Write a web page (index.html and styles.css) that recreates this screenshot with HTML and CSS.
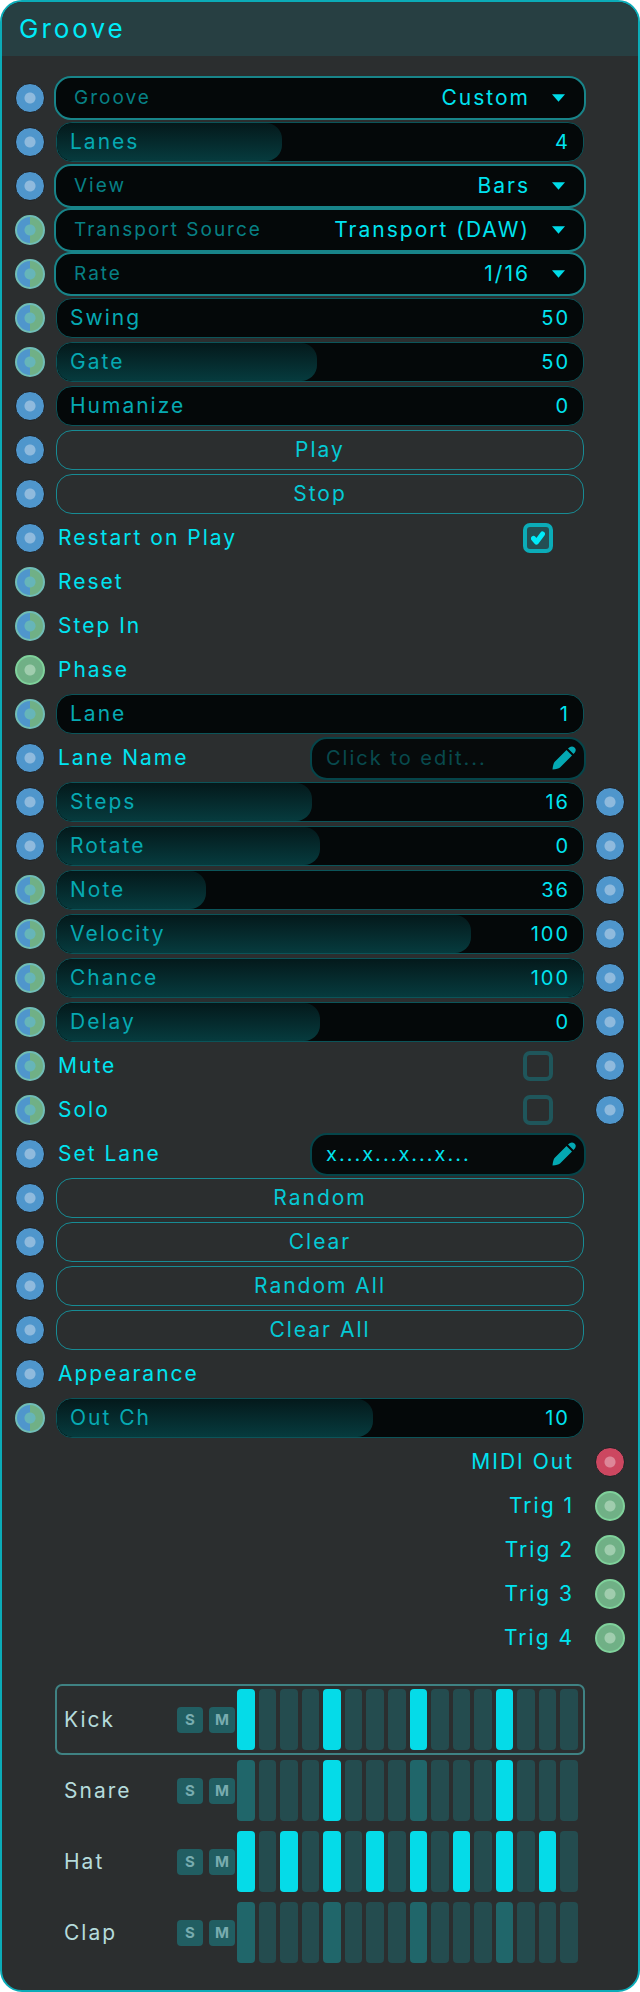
FILE: index.html
```html
<!DOCTYPE html>
<html lang="en">
<head>
    <meta charset="UTF-8">
    <meta name="viewport" content="width=device-width, initial-scale=1.0">
    <title>Groove</title>
    <link rel="stylesheet" href="styles.css">
</head>
<body>
    <div class="module">
        <h1 class="title">Groove</h1>

        <div class="rows">
            <div class="row">
                <span class="port"></span>
                <div class="dropdown">
                    <label for="groove">Groove</label>
                    <select id="groove"><option>Custom</option></select>
                    <svg class="arrow" viewBox="0 0 14 8"><path d="M0 0h14L7 8z"/></svg>
                </div>
            </div>
            <div class="row">
                <span class="port"></span>
                <div class="slider">
                    <span class="fill" style="width: 42.86%"></span>
                    <input type="range" id="lanes" min="1" max="8" value="4">
                    <label for="lanes">Lanes</label>
                    <output for="lanes">4</output>
                </div>
            </div>
            <div class="row">
                <span class="port"></span>
                <div class="dropdown">
                    <label for="view">View</label>
                    <select id="view"><option>Bars</option></select>
                    <svg class="arrow" viewBox="0 0 14 8"><path d="M0 0h14L7 8z"/></svg>
                </div>
            </div>
            <div class="row">
                <span class="port split"></span>
                <div class="dropdown">
                    <label for="transport">Transport Source</label>
                    <select id="transport"><option>Transport (DAW)</option></select>
                    <svg class="arrow" viewBox="0 0 14 8"><path d="M0 0h14L7 8z"/></svg>
                </div>
            </div>
            <div class="row">
                <span class="port split"></span>
                <div class="dropdown">
                    <label for="rate">Rate</label>
                    <select id="rate"><option>1/16</option></select>
                    <svg class="arrow" viewBox="0 0 14 8"><path d="M0 0h14L7 8z"/></svg>
                </div>
            </div>
            <div class="row">
                <span class="port split"></span>
                <div class="slider">
                    <input type="range" id="swing" min="50" max="75" value="50">
                    <label for="swing">Swing</label>
                    <output for="swing">50</output>
                </div>
            </div>
            <div class="row">
                <span class="port split"></span>
                <div class="slider">
                    <span class="fill" style="width: 49.5%"></span>
                    <input type="range" id="gate" min="1" max="100" value="50">
                    <label for="gate">Gate</label>
                    <output for="gate">50</output>
                </div>
            </div>
            <div class="row">
                <span class="port"></span>
                <div class="slider">
                    <input type="range" id="humanize" min="0" max="100" value="0">
                    <label for="humanize">Humanize</label>
                    <output for="humanize">0</output>
                </div>
            </div>
            <div class="row">
                <span class="port"></span>
                <button class="action">Play</button>
            </div>
            <div class="row">
                <span class="port"></span>
                <button class="action">Stop</button>
            </div>
            <div class="row">
                <span class="port"></span>
                <div class="plain">
                    <label for="restart">Restart on Play</label>
                    <span class="check">
                        <input type="checkbox" id="restart" checked>
                        <svg class="tick" viewBox="0 0 14 14"><path d="M2.500 7.500l3 3.500L11.500 3"/></svg>
                    </span>
                </div>
            </div>
            <div class="row">
                <span class="port split"></span>
                <div class="plain">Reset</div>
            </div>
            <div class="row">
                <span class="port split"></span>
                <div class="plain">Step In</div>
            </div>
            <div class="row">
                <span class="port green"></span>
                <div class="plain">Phase</div>
            </div>

            <!-- selected lane -->
            <div class="row">
                <span class="port split"></span>
                <div class="slider">
                    <input type="range" id="lane" min="1" max="4" value="1">
                    <label for="lane">Lane</label>
                    <output for="lane">1</output>
                </div>
            </div>
            <div class="row">
                <span class="port"></span>
                <div class="plain">
                    <label for="lane_name">Lane Name</label>
                    <span class="textbox">
                        <input type="text" id="lane_name" placeholder="Click to edit..." autocomplete="off">
                        <svg class="pencil" viewBox="0 0 24 24"><path d="M14.500 4l5.500 5.500L8 21.500Q6 23 .5 23.500 1 18 2.500 16zM16 2.500q3.500-3.500 6.500-1t-1 6.500z"/></svg>
                    </span>
                </div>
            </div>
            <div class="row">
                <span class="port"></span>
                <div class="slider">
                    <span class="fill" style="width: 48.39%"></span>
                    <input type="range" id="steps" min="1" max="32" value="16">
                    <label for="steps">Steps</label>
                    <output for="steps">16</output>
                </div>
                <span class="port"></span>
            </div>
            <div class="row">
                <span class="port"></span>
                <div class="slider">
                    <span class="fill" style="width: 50%"></span>
                    <input type="range" id="rotate" min="-16" max="16" value="0">
                    <label for="rotate">Rotate</label>
                    <output for="rotate">0</output>
                </div>
                <span class="port"></span>
            </div>
            <div class="row">
                <span class="port split"></span>
                <div class="slider">
                    <span class="fill" style="width: 28.35%"></span>
                    <input type="range" id="note" min="0" max="127" value="36">
                    <label for="note">Note</label>
                    <output for="note">36</output>
                </div>
                <span class="port"></span>
            </div>
            <div class="row">
                <span class="port split"></span>
                <div class="slider">
                    <span class="fill" style="width: 78.74%"></span>
                    <input type="range" id="velocity" min="0" max="127" value="100">
                    <label for="velocity">Velocity</label>
                    <output for="velocity">100</output>
                </div>
                <span class="port"></span>
            </div>
            <div class="row">
                <span class="port split"></span>
                <div class="slider">
                    <span class="fill" style="width: 100%"></span>
                    <input type="range" id="chance" min="0" max="100" value="100">
                    <label for="chance">Chance</label>
                    <output for="chance">100</output>
                </div>
                <span class="port"></span>
            </div>
            <div class="row">
                <span class="port split"></span>
                <div class="slider">
                    <span class="fill" style="width: 50%"></span>
                    <input type="range" id="delay" min="-100" max="100" value="0">
                    <label for="delay">Delay</label>
                    <output for="delay">0</output>
                </div>
                <span class="port"></span>
            </div>
            <div class="row">
                <span class="port split"></span>
                <div class="plain">
                    <label for="mute">Mute</label>
                    <span class="check"><input type="checkbox" id="mute"></span>
                </div>
                <span class="port"></span>
            </div>
            <div class="row">
                <span class="port split"></span>
                <div class="plain">
                    <label for="solo">Solo</label>
                    <span class="check"><input type="checkbox" id="solo"></span>
                </div>
                <span class="port"></span>
            </div>
            <div class="row">
                <span class="port"></span>
                <div class="plain">
                    <label for="set_lane">Set Lane</label>
                    <span class="textbox">
                        <input type="text" id="set_lane" value="x...x...x...x..." autocomplete="off">
                        <svg class="pencil" viewBox="0 0 24 24"><path d="M14.500 4l5.500 5.500L8 21.500Q6 23 .5 23.500 1 18 2.500 16zM16 2.500q3.500-3.500 6.500-1t-1 6.500z"/></svg>
                    </span>
                </div>
            </div>
            <div class="row">
                <span class="port"></span>
                <button class="action">Random</button>
            </div>
            <div class="row">
                <span class="port"></span>
                <button class="action">Clear</button>
            </div>
            <div class="row">
                <span class="port"></span>
                <button class="action">Random All</button>
            </div>
            <div class="row">
                <span class="port"></span>
                <button class="action">Clear All</button>
            </div>
            <div class="row">
                <span class="port"></span>
                <div class="plain">Appearance</div>
            </div>
            <div class="row">
                <span class="port split"></span>
                <div class="slider">
                    <span class="fill" style="width: 60%"></span>
                    <input type="range" id="out_ch" min="1" max="16" value="10">
                    <label for="out_ch">Out Ch</label>
                    <output for="out_ch">10</output>
                </div>
            </div>

            <!-- outputs -->
            <div class="row"><div class="plain out">MIDI Out</div><span class="port red"></span></div>
            <div class="row"><div class="plain out">Trig 1</div><span class="port green"></span></div>
            <div class="row"><div class="plain out">Trig 2</div><span class="port green"></span></div>
            <div class="row"><div class="plain out">Trig 3</div><span class="port green"></span></div>
            <div class="row"><div class="plain out">Trig 4</div><span class="port green"></span></div>
        </div>

        <div class="lanes">
            <div class="lane selected" data-pattern="x...x...x...x...">
                <span class="name">Kick</span>
                <button class="toggle">S</button>
                <button class="toggle">M</button>
                <div class="steps"></div>
            </div>
            <div class="lane" data-pattern="....x.......x...">
                <span class="name">Snare</span>
                <button class="toggle">S</button>
                <button class="toggle">M</button>
                <div class="steps"></div>
            </div>
            <div class="lane" data-pattern="x.x.x.x.x.x.x.x.">
                <span class="name">Hat</span>
                <button class="toggle">S</button>
                <button class="toggle">M</button>
                <div class="steps"></div>
            </div>
            <div class="lane" data-pattern="................">
                <span class="name">Clap</span>
                <button class="toggle">S</button>
                <button class="toggle">M</button>
                <div class="steps"></div>
            </div>
        </div>
    </div>

    <script src="script.js"></script>
</body>
</html>
```

FILE: styles.css
```css
* {
    box-sizing: border-box;
}
body {
    margin: 0;
    background: #fff;
    color: #00e3f0;
    font-family: Inter, "Open Sans", sans-serif;
    font-size: 21px;
    line-height: 24px;
    letter-spacing: 2px;
}
input, select, button {
    margin: 0;
    padding: 0;
    border: none;
    background: none;
    color: inherit;
    font: inherit;
    letter-spacing: inherit;
    appearance: none;
}
.module {
    border: 2px solid #0bacb8;
    border-radius: 22px;
    background: #2b2e2f;
    overflow: hidden;
}
.title {
    margin: 0;
    padding: 11px 17px;
    background: #273f42;
    color: #00ebf8;
    font-size: 26px;
    font-weight: 400;
    line-height: 32px;
    letter-spacing: 3px;
}
.rows {
    padding: 20px 13px 0;
}
.row {
    display: grid;
    grid-template-columns: 30px 1fr 30px;
    column-gap: 9px;
    align-items: center;
    height: 44px;
}

/* ports */
.port {
    width: 30px;
    height: 30px;
    border: 1px solid #202427;
    border-radius: 50%;
    background: radial-gradient(circle, #8fbadd 5px, #4f96cc 6px);
}
.port.split {
    border: 2px solid #70bdb6;
    background: radial-gradient(circle, #66b5b9 5px, transparent 6px),
        linear-gradient(90deg, #4f96cc 50%, #70b086 50%);
}
.port.green {
    border: 2px solid #7fd19b;
    background: radial-gradient(circle, #a0cdae 5px, #70b086 6px);
}
.port.red {
    background: radial-gradient(circle, #dd8798 5px, #cc4760 6px);
}

/* dropdowns */
.dropdown {
    display: flex;
    align-items: center;
    height: 44px;
    padding: 0 19px 0 18px;
    border: 2px solid #188489;
    border-radius: 17px;
    background: #040809;
}
.dropdown label {
    color: #078085;
    font-size: 19px;
}
.dropdown select {
    flex: 1;
    min-width: 0;
    height: 40px;
    text-align: right;
    text-align-last: right;
}
.arrow {
    width: 13px;
    height: 8px;
    margin-left: 22px;
    fill: #00dbe8;
}

/* sliders, everything shares one grid cell */
.slider {
    display: grid;
    align-items: center;
    height: 40px;
    margin: 0 2px;
    border: 1px solid #0b5459;
    border-radius: 16px;
    background: #040809;
    overflow: hidden;
}
.slider > * {
    grid-area: 1 / 1;
}
.fill {
    height: 38px;
    border-radius: 16px;
    background: linear-gradient(#04191b, #063b3e);
}
.slider input {
    width: 100%;
    height: 38px;
}
.slider input::-webkit-slider-thumb {
    appearance: none;
    width: 1px;
    height: 38px;
}
.slider label {
    padding-left: 13px;
    color: #06a9b2;
    pointer-events: none;
}
.slider output {
    padding-right: 13px;
    font-size: 20px;
    text-align: right;
    pointer-events: none;
}

.action {
    height: 40px;
    margin: 0 2px;
    border: 1px solid #178b94;
    border-radius: 16px;
    color: #05c9d5;
}

.plain {
    display: flex;
    align-items: center;
    justify-content: space-between;
    padding-left: 4px;
}
.out {
    grid-column: 2;
    justify-content: flex-end;
    padding-right: 12px;
}

/* checkboxes */
.check {
    display: grid;
    place-items: center;
    margin-right: 33px;
}
.check > * {
    grid-area: 1 / 1;
}
.check input {
    width: 30px;
    height: 30px;
    border: 4px solid #1f565b;
    border-radius: 7px;
}
.check input:checked {
    border-color: #0bacb8;
    background: #244f53;
}
.tick {
    width: 14px;
    height: 14px;
    fill: none;
    stroke: #00ebf8;
    stroke-width: 5;
    stroke-linecap: round;
    stroke-linejoin: round;
    pointer-events: none;
}

/* text boxes */
.textbox {
    display: flex;
    align-items: center;
    width: 276px;
    height: 43px;
    padding: 0 8px 0 14px;
    border: 2px solid #05454a;
    border-radius: 17px;
    background: #060a0b;
}
.textbox input {
    flex: 1;
    min-width: 0;
    height: 36px;
    font-size: 20px;
}
.textbox input::placeholder {
    color: #084a4e;
    opacity: 1;
}
.pencil {
    width: 24px;
    height: 24px;
    margin-left: 8px;
    fill: #04a9b3;
}

/* lanes */
.lanes {
    padding: 24px 53px 22px;
}
.lane {
    display: flex;
    align-items: center;
    height: 71px;
    padding: 3px 5px 3px 7px;
    border: 2px solid transparent;
    border-radius: 7px;
}
.lane.selected {
    border-color: #3f8283;
}
.name {
    width: 113px;
    color: #b5dbdc;
}
.toggle {
    width: 26px;
    height: 26px;
    margin-right: 6px;
    border-radius: 4px;
    background: #215e62;
    color: #78acaf;
    font-size: 15px;
    font-weight: 700;
    line-height: 26px;
    letter-spacing: 0;
}
.toggle + .toggle {
    margin-right: 2px;
}
.steps {
    flex: 1;
    display: grid;
    grid-template-columns: repeat(16, 1fr);
    column-gap: 4px;
    height: 61px;
}
.step {
    border-radius: 4px;
    background: #244c4f;
}
.step:nth-child(4n+1) {
    background: #20666a;
}
.step.on {
    background: #05dbe8;
}
```

FILE: script.js
```js
document.querySelectorAll(".lane").forEach(lane => {
    const steps = lane.querySelector(".steps")
    for (const char of lane.dataset.pattern) {
        const step = document.createElement("button")
        step.className = char === "x" ? "step on" : "step"
        step.onclick = () => step.classList.toggle("on")
        steps.appendChild(step)
    }
})

document.querySelectorAll(".slider input").forEach(input => {
    input.oninput = () => {
        const slider = input.parentElement
        const fill = slider.querySelector(".fill")
        slider.querySelector("output").value = input.value
        if (fill) {
            fill.style.width = (input.value - input.min) / (input.max - input.min) * 100 + "%"
        }
    }
})
```
